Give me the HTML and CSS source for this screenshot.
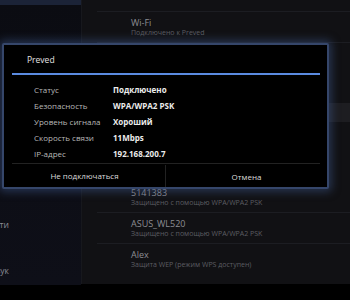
FILE: index.html
```html
<!DOCTYPE html>
<html lang="ru">
<head>
  <meta charset="UTF-8" />
  <title>Preved</title>
  <link rel="stylesheet" href="styles.css">
</head>
<body>
  <div class="screen">
    <aside class="sidebar">
      <div class="side-selected"></div>
      <div class="side-space"></div>
      <div class="side-item"><span>Беспроводные сети</span></div>
      <div class="side-item"><span>Звук</span></div>
    </aside>

    <section class="panel">
      <div class="net-item cut"></div>
      <div class="net-item">
        <div class="net-name">Wi-Fi</div>
        <div class="net-sub">Подключено к Preved</div>
      </div>
      <div class="net-hidden">
        <div class="net-active"></div>
      </div>
      <div class="net-item">
        <div class="net-name">5141383</div>
        <div class="net-sub">Защищено с помощью WPA/WPA2 PSK</div>
      </div>
      <div class="net-item">
        <div class="net-name">ASUS_WL520</div>
        <div class="net-sub">Защищено с помощью WPA/WPA2 PSK</div>
      </div>
      <div class="net-item last">
        <div class="net-name">Alex</div>
        <div class="net-sub">Защита WEP (режим WPS доступен)</div>
      </div>
    </section>

    <div class="dialog">
      <div class="dialog-title">Preved</div>
      <div class="dialog-line"></div>
      <div class="info">
        <div class="info-row"><span class="label">Статус</span><span class="value">Подключено</span></div>
        <div class="info-row"><span class="label">Безопасность</span><span class="value">WPA/WPA2 PSK</span></div>
        <div class="info-row"><span class="label">Уровень сигнала</span><span class="value">Хороший</span></div>
        <div class="info-row"><span class="label">Скорость связи</span><span class="value">11Mbps</span></div>
        <div class="info-row"><span class="label">IP-адрес</span><span class="value">192.168.200.7</span></div>
      </div>
      <div class="buttons">
        <button class="btn">Не подключаться</button>
        <button class="btn">Отмена</button>
      </div>
    </div>
  </div>
</body>
</html>
```

FILE: styles.css
```css
body {
  margin: 0;
  background: #000;
  font-family: 'Open Sans', 'Noto Sans', sans-serif;
}

.screen {
  position: relative;
  width: 350px;
  height: 300px;
  display: flex;
  align-items: flex-start;
  overflow: hidden;
  background: #000;
}

/* left settings column, cut off by the crop */
.sidebar {
  width: 81px;
  height: 285px;
  background: linear-gradient(#0b0c12, #0e0f18);
  flex-shrink: 0;
}

.side-selected {
  height: 5px;
  background: #1b2337;
}

.side-space {
  height: 196px;
}

.side-item {
  width: 9px;
  height: 46px;
  display: flex;
  justify-content: flex-end;
  align-items: center;
  white-space: nowrap;
  font-size: 8.5px;
  color: #8a8c94;
}

/* right list of networks */
.panel {
  flex: 1;
  height: 284px;
  background: #111114;
  border-left: 1px solid #17181d;
  overflow: hidden;
}

.net-item {
  height: 30px;
  margin-left: 15px;
  padding-left: 34px;
  border-bottom: 1px solid #1c1d22;
  display: flex;
  flex-direction: column;
  justify-content: center;
}

.net-item.cut {
  height: 11px;
}

.net-item.last {
  border-bottom: none;
}

.net-name {
  font-size: 9px;
  line-height: 11px;
  color: #8d8e93;
}

.net-sub {
  font-size: 7px;
  line-height: 10px;
  color: #5c5d62;
}

.net-hidden {
  height: 79px;
  padding-top: 60px;
}

.net-active {
  height: 19px;
  background: #1d1d21;
}

/* dialog */
.dialog {
  position: absolute;
  left: 2px;
  top: 43px;
  width: 323px;
  height: 142px;
  background: #000;
  border: 2px solid #35466a;
  border-radius: 2px;
  box-shadow: 0 0 9px 3px rgba(60, 85, 135, 0.5);
  display: flex;
  flex-direction: column;
}

.dialog-title {
  height: 28px;
  padding-left: 23px;
  display: flex;
  align-items: center;
  font-size: 8.5px;
  color: #e4e4e4;
}

.dialog-line {
  height: 2px;
  margin: 0 7px 0 8px;
  background: #5b8be0;
}

.info {
  padding: 6px 0 2px 22px;
  margin: 0 7px 0 8px;
  border-bottom: 1px solid #222;
}

.info-row {
  height: 16px;
  display: flex;
  align-items: center;
  font-size: 8px;
}

.label {
  width: 79px;
  color: #b8b8b8;
}

.value {
  color: #ececec;
  font-weight: bold;
}

.buttons {
  flex: 1;
  display: flex;
}

.btn {
  flex: 1;
  background: none;
  border: none;
  color: #dcdcdc;
  font-family: inherit;
  font-size: 8px;
  padding: 0;
}

.btn + .btn {
  border-left: 1px solid #222;
  margin-top: 1px;
}
```
